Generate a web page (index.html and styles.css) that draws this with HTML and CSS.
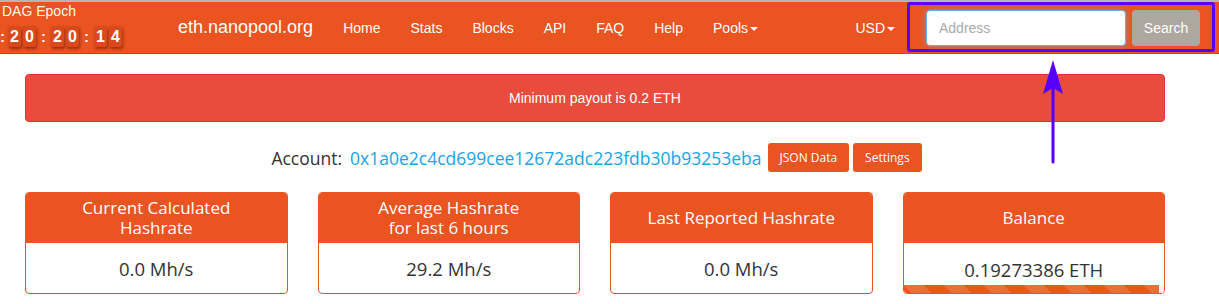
FILE: index.html
```html
<!DOCTYPE html>
<html lang="en">
  <head>
    <meta charset="UTF-8" />
    <title>eth.nanopool.org</title>
    <link rel="stylesheet" href="styles.css">
  </head>
  <body>
    <nav class="navbar">
      <div class="epoch">
        <div class="epoch-title">DAG Epoch</div>
        <div class="countdown">
          <span class="sep first">:</span>
          <span class="digit">2</span><span class="digit">0</span>
          <span class="sep">:</span>
          <span class="digit">2</span><span class="digit">0</span>
          <span class="sep">:</span>
          <span class="digit">1</span><span class="digit">4</span>
        </div>
      </div>
      <a class="brand" href="#">eth.nanopool.org</a>
      <ul class="nav-links">
        <li><a href="#">Home</a></li>
        <li><a href="#">Stats</a></li>
        <li><a href="#">Blocks</a></li>
        <li><a href="#">API</a></li>
        <li><a href="#">FAQ</a></li>
        <li><a href="#">Help</a></li>
        <li><a href="#">Pools<span class="caret"></span></a></li>
      </ul>
      <a class="currency" href="#">USD<span class="caret"></span></a>
      <form class="search-form">
        <input type="text" class="search-input" placeholder="Address" />
        <button type="button" class="search-btn">Search</button>
      </form>
    </nav>

    <svg class="arrow" width="30" height="110" viewBox="0 0 30 110">
      <line x1="15" y1="20" x2="15" y2="104" stroke="#5500ff" stroke-width="3" stroke-linecap="round" />
      <polygon points="15,2 25,36 15,30 5,36" fill="#5500ff" />
    </svg>

    <div class="container">
      <div class="alert">Minimum payout is 0.2 ETH</div>

      <div class="account">
        <span class="account-label">Account:</span>
        <a class="account-addr" href="#">0x1a0e2c4cd699cee12672adc223fdb30b93253eba</a>
        <button class="btn-small">JSON Data</button>
        <button class="btn-small">Settings</button>
      </div>

      <div class="cards">
        <div class="card">
          <div class="card-head"><span>Current Calculated</span><span>Hashrate</span></div>
          <div class="card-body">0.0 Mh/s</div>
        </div>
        <div class="card">
          <div class="card-head"><span>Average Hashrate</span><span>for last 6 hours</span></div>
          <div class="card-body">29.2 Mh/s</div>
        </div>
        <div class="card">
          <div class="card-head"><span>Last Reported Hashrate</span></div>
          <div class="card-body">0.0 Mh/s</div>
        </div>
        <div class="card">
          <div class="card-head"><span>Balance</span></div>
          <div class="card-body balance">0.19273386 ETH</div>
          <div class="progress"><div class="progress-bar" style="width: 98%"></div></div>
        </div>
      </div>
    </div>
  </body>
</html>
```

FILE: styles.css
```css
* {
  margin: 0;
  padding: 0;
  box-sizing: border-box;
}

body {
  font-family: "Liberation Sans", Arial, sans-serif;
  background: #fff;
  color: #333;
  position: relative;
  overflow: hidden;
}

/* Navbar */
.navbar {
  height: 54px;
  background: #e95420;
  border-top: 2px solid #b5b5b5;
  border-bottom: 1px solid #c8461a;
  display: flex;
  align-items: center;
  color: #fff;
}

.epoch {
  width: 160px;
  align-self: flex-start;
  padding-top: 1px;
}

.epoch-title {
  font-size: 14px;
  color: #fffbe6;
  padding-left: 2px;
  line-height: 16px;
}

.countdown {
  display: flex;
  align-items: center;
  margin-top: 6px;
  height: 22px;
}

.digit {
  width: 13px;
  height: 21px;
  margin-right: 2px;
  background: #d9491b;
  border-radius: 2px;
  box-shadow: 1px 2px 3px rgba(90, 20, 0, 0.55);
  font-weight: bold;
  font-size: 16px;
  text-align: center;
  line-height: 21px;
}

.digit + .digit {
  margin-right: 0;
}

.sep {
  font-weight: bold;
  font-size: 15px;
  width: 15px;
  text-align: center;
}

.sep.first {
  width: 8px;
  text-align: left;
}

.brand {
  color: #fff;
  text-decoration: none;
  font-size: 18px;
  margin-left: 18px;
}

.nav-links {
  list-style: none;
  display: flex;
  margin-left: 15px;
}

.nav-links a {
  display: block;
  color: #fff;
  text-decoration: none;
  font-size: 14px;
  padding: 0 15px;
}

.caret {
  display: inline-block;
  width: 0;
  height: 0;
  margin-left: 2px;
  vertical-align: middle;
  border-top: 4px solid #fff;
  border-left: 4px solid transparent;
  border-right: 4px solid transparent;
}

.currency {
  color: #fff;
  text-decoration: none;
  font-size: 14px;
  margin-left: auto;
}

.search-form {
  display: flex;
  align-items: center;
  margin: 0 4px 0 12px;
  padding: 5px 12px 3px 16px;
  border: 3px solid #5500ff;
  border-radius: 3px;
  height: 50px;
  width: 308px;
  align-self: flex-start;
}

.search-input {
  width: 200px;
  height: 36px;
  border: 1px solid #66afe9;
  border-radius: 4px;
  padding: 6px 12px;
  font-family: "Liberation Sans", Arial, sans-serif;
  font-size: 14px;
  box-shadow: 0 0 6px rgba(102, 175, 233, 0.6);
  outline: none;
}

.search-input::placeholder {
  color: #aaa;
}

.search-btn {
  margin-left: 6px;
  height: 36px;
  width: 69px;
  border: none;
  border-radius: 4px;
  background: #aea79f;
  color: #fff;
  font-family: "Liberation Sans", Arial, sans-serif;
  font-size: 14px;
}

.arrow {
  position: absolute;
  left: 1038px;
  top: 58px;
}

/* Content */
.container {
  width: 1140px;
  margin-left: 25px;
  padding-top: 20px;
}

.alert {
  height: 48px;
  background: #e74c3c;
  border: 1px solid #e0323a;
  border-radius: 4px;
  color: #fff;
  font-size: 14px;
  text-align: center;
  line-height: 46px;
}

.account {
  display: flex;
  align-items: center;
  justify-content: center;
  margin-top: 21px;
  font-family: "Open Sans", sans-serif;
  padding-left: 7px;
}

.account-label {
  font-size: 17.5px;
  color: #333;
  margin-right: 8px;
}

.account-addr {
  font-size: 17.5px;
  color: #1aa3e8;
  text-decoration: none;
  margin-right: 6px;
}

.btn-small {
  background: #e95420;
  color: #fff;
  border: none;
  border-radius: 3px;
  height: 29px;
  padding: 0 12px;
  margin-right: 4px;
  font-family: "Open Sans", sans-serif;
  font-size: 12px;
}

.cards {
  display: grid;
  grid-template-columns: repeat(4, 1fr);
  gap: 30px;
  margin-top: 20px;
}

.card {
  border: 1px solid #e95420;
  border-radius: 4px;
  overflow: hidden;
  font-family: "Open Sans", sans-serif;
}

.card-head {
  height: 50px;
  background: #e95420;
  color: #fff;
  font-size: 17px;
  line-height: 20px;
  text-align: center;
  display: flex;
  flex-direction: column;
  align-items: center;
  justify-content: center;
}

.card-body {
  height: 50px;
  font-size: 18.5px;
  color: #333;
  text-align: center;
  line-height: 52px;
}

.card-body.balance {
  height: 42px;
  line-height: 54px;
}

.progress {
  height: 8px;
  background: #f5f5f5;
}

.progress-bar {
  height: 100%;
  background-color: #e95420;
  background-image: linear-gradient(45deg, rgba(255, 255, 255, 0.15) 25%, transparent 25%, transparent 50%, rgba(255, 255, 255, 0.15) 50%, rgba(255, 255, 255, 0.15) 75%, transparent 75%, transparent);
  background-size: 40px 40px;
}
```
